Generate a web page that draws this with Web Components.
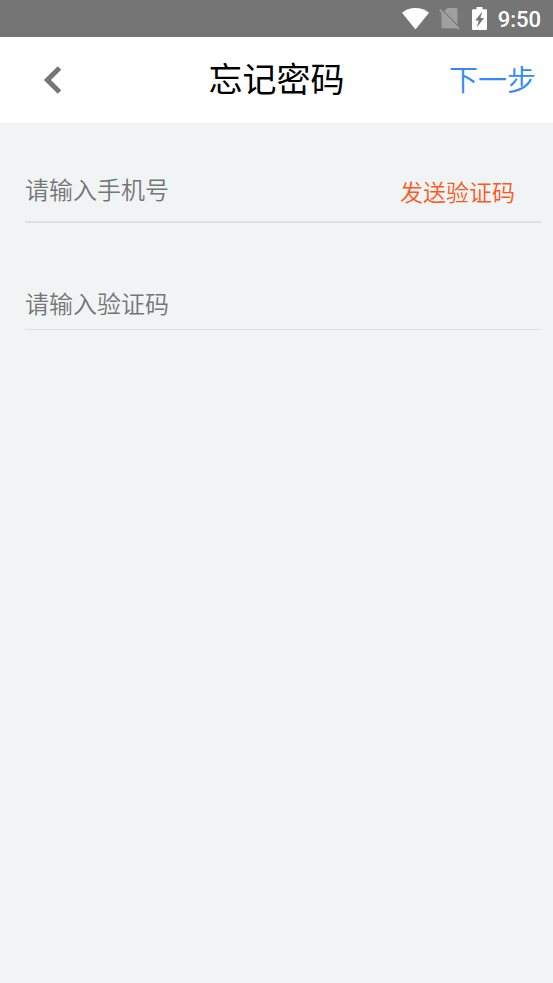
<!DOCTYPE html>
<html lang="zh-CN">
<head>
<meta charset="utf-8">
<meta name="viewport" content="width=device-width, initial-scale=1">
<title>忘记密码</title>
<style>
  html { height: 100%; }
  body {
    margin: 0;
    min-height: 100%;
    background: #f0f4f5;
    font-family: "Noto Sans CJK SC", sans-serif;
  }
</style>
</head>
<body>
<forgot-page></forgot-page>

<script>
class StatusBar extends HTMLElement {
  constructor() {
    super();
    this.attachShadow({ mode: "open" }).innerHTML = `
      <style>
        :host {
          display: flex; align-items: center; justify-content: flex-end;
          box-sizing: border-box; height: 37px; padding-right: 12px;
          background: #757575; color: #fff;
          font: 500 22px/36px Roboto, sans-serif;
        }
        svg { display: block; flex: none; }
        span { padding-top: 2px; }
        .wifi { margin-right: 9px; }
        .sim { margin-right: 12px; }
        .battery { margin-right: 11px; }
      </style>
      <svg class="wifi" width="28" height="22" viewBox="0 0 28 22" aria-hidden="true">
        <path fill="#fff" d="M13.500 21.500 0 4.800C3.500 2 8.200 0 13.500 0s10 2 13.500 4.800z"/>
      </svg>
      <svg class="sim" width="21" height="22" viewBox="0 0 21 22" aria-hidden="true">
        <path fill="#a0a0a0" d="M8.500 0H17q1.500 0 1.500 1.500v15L5.200 3.200z"/>
        <path fill="#a0a0a0" d="M2.500 3.500 19 20.200H4q-1.500 0-1.500-1.500z"/>
        <path stroke="#a0a0a0" stroke-width="2" d="M.8 1.800 20 21"/>
      </svg>
      <svg class="battery" width="15" height="23" viewBox="0 0 15 23" aria-hidden="true">
        <path fill="#fff" d="M4.500 0h6v2.200H14q1 0 1 1V22q0 1-1 1H1q-1 0-1-1V3.200q0-1 1-1h3.500z"/>
        <path fill="#757575" d="M10.300 4.500 3.200 13.500h3.500L4.700 20.500 12 11H8.400z"/>
      </svg>
      <span><slot></slot></span>`;
  }
}
customElements.define("status-bar", StatusBar);

class TitleBar extends HTMLElement {
  constructor() {
    super();
    this.attachShadow({ mode: "open" }).innerHTML = `
      <style>
        :host {
          display: grid; grid-template-columns: 1fr auto 1fr; align-items: center;
          box-sizing: border-box; height: 86px; padding: 0 17px;
          background: #fff;
        }
        h1 { margin: 0; padding-bottom: 4px; font-size: 34px; line-height: 48px; font-weight: 400; color: #000; }
        button { border: 0; padding: 0; background: none; font: inherit; cursor: pointer; }
        .back { justify-self: start; padding: 10px 26px; }
        .back svg { display: block; }
        .next { justify-self: end; padding-bottom: 4px; font-size: 29px; font-weight: 350; line-height: 48px; color: #3388fd; }
      </style>
      <button class="back" type="button" aria-label="返回">
        <svg width="20" height="28" viewBox="0 0 20 28" aria-hidden="true">
          <path fill="none" stroke="#757575" stroke-width="5" d="M16.500 2 4.400 14 16.500 26"/>
        </svg>
      </button>
      <h1><slot></slot></h1>
      <button class="next" type="button"><slot name="action"></slot></button>`;
  }
}
customElements.define("title-bar", TitleBar);

class LineField extends HTMLElement {
  connectedCallback() {
    if (this.shadowRoot) return;
    const label = this.getAttribute("label");
    this.attachShadow({ mode: "open" }).innerHTML = `
      <style>
        :host { display: flex; align-items: center; border-bottom: var(--rule, 1px) solid #dde1e2; }
        input {
          flex: 1; min-width: 0; width: 0; height: 40px;
          box-sizing: border-box; border: 0; padding: 0 0 2px; outline: 0;
          background: none; font: inherit; font-size: 24px; font-weight: 350; color: #333;
        }
        input::placeholder { color: #757575; opacity: 1; }
      </style>
      <input type="${this.getAttribute("type") || "text"}" aria-label="${label}" placeholder="${label}">
      <slot></slot>`;
  }
}
customElements.define("line-field", LineField);

class SendCode extends HTMLElement {
  constructor() {
    super();
    this.attachShadow({ mode: "open" }).innerHTML = `
      <style>
        :host { display: block; }
        button {
          display: block; border: 0; padding: 4px 26px 0 0; background: none; cursor: pointer;
          font: inherit; font-size: 23px; font-weight: 350; line-height: 40px; color: #ff5722;
        }
      </style>
      <button type="button"><slot></slot></button>`;
  }
}
customElements.define("send-code", SendCode);

class ForgotPage extends HTMLElement {
  constructor() {
    super();
    this.attachShadow({ mode: "open" }).innerHTML = `
      <style>
        :host { display: block; }
        form { display: flex; flex-direction: column; padding: 44px 12px 0 25px; }
        .phone { --rule: 2px; padding-bottom: 10px; margin-bottom: 60px; }
        .code { padding-bottom: 6px; }
      </style>
      <status-bar>9:50</status-bar>
      <title-bar>忘记密码<span slot="action">下一步</span></title-bar>
      <form>
        <line-field class="phone" type="tel" label="请输入手机号"><send-code>发送验证码</send-code></line-field>
        <line-field class="code" label="请输入验证码"></line-field>
      </form>`;
  }
}
customElements.define("forgot-page", ForgotPage);
</script>
</body>
</html>
